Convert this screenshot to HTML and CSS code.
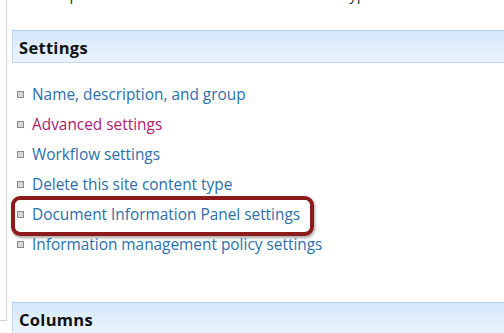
FILE: index.html
```html
<!DOCTYPE html>
<html>
  <head>
    <meta charset="UTF-8">
    <title>Site Content Type</title>
    <link rel="stylesheet" href="styles.css">
  </head>
  <body>
  <div class="page">
    <div class="rail"></div>
    <div class="main">
      <p class="intro">Description: Create a new Document content type</p>
      <div class="section-head">Settings</div>
      <ul class="links">
        <li><a href="#">Name, description, and group</a></li>
        <li><a href="#" class="visited">Advanced settings</a></li>
        <li><a href="#">Workflow settings</a></li>
        <li><a href="#">Delete this site content type</a></li>
        <li class="callout"><a href="#">Document Information Panel settings</a></li>
        <li><a href="#">Information management policy settings</a></li>
      </ul>
      <div class="section-head cols">Columns</div>
    </div>
  </div>
  </body>
</html>
```

FILE: styles.css
```css
body {
  margin: 0;
  background: #fff;
  font-family: "Open Sans", "DejaVu Sans", sans-serif;
  overflow: hidden;
}

.page {
  display: flex;
  align-items: flex-start;
}

.rail {
  width: 6px;
  height: 320px;
  border-right: 1px solid #d4d4d4;
  border-bottom: 1px solid #d4d4d4;
  flex: none;
}

.main {
  flex: 1;
  margin-left: 5px;
}

.intro {
  margin: -16px 0 0 14px;
  height: 46px;
  font-size: 15px;
  line-height: 20px;
  color: #333;
}

.section-head {
  height: 31px;
  border-top: 1px solid #b5d0ea;
  border-bottom: 1px solid #c5dbf0;
  border-left: 1px solid #c5dbf0;
  background: linear-gradient(#d6e8fb, #eaf3fd);
  padding-left: 6px;
  font-size: 16.5px;
  font-weight: bold;
  letter-spacing: 0.3px;
  line-height: 33px;
  color: #111;
}

.links {
  list-style: none;
  margin: 17px 0 0 0;
  padding: 0;
}

.links li {
  position: relative;
  height: 30px;
  line-height: 30px;
  font-size: 15.4px;
  display: flex;
  align-items: center;
}

.links li::before {
  content: "";
  width: 5px;
  height: 5px;
  border: 1px solid #8a8a8a;
  background: #d8d8d8;
  margin: -2px 8px 0 5px;
  flex: none;
}

.links a {
  color: #2b6fab;
  text-decoration: none;
}

.links a.visited {
  color: #b01a72;
}

.callout::after {
  content: "";
  position: absolute;
  left: -1px;
  top: -4px;
  width: 295px;
  height: 32px;
  border: 4px solid #8e1b1b;
  border-radius: 9px;
  box-shadow: 1px 2px 3px rgba(0, 0, 0, 0.35);
}

.cols {
  margin-top: 42px;
}
```
